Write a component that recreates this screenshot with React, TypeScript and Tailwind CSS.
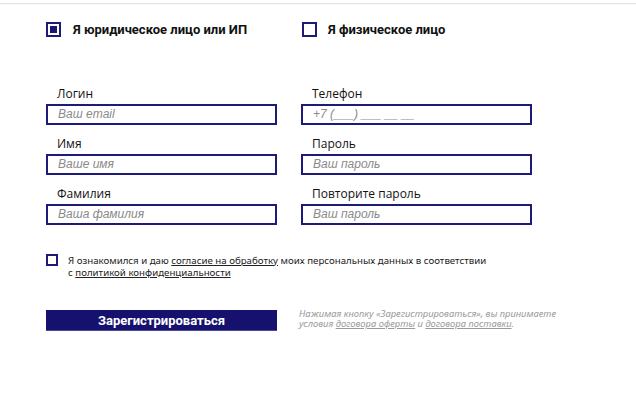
import React from "react";

const Field = ({ label, placeholder }: { label: string; placeholder: string }) => (
  <div className="flex flex-col">
    <label className="block pl-[11px] text-[12px] leading-[14px] font-medium text-[#111] mb-[3px] font-['Open_Sans',sans-serif]">
      {label}
    </label>
    <div className="h-[21px] border-2 border-[#1e1a78] flex items-center pl-[10px]">
      <span className="text-[12px] italic text-[#8a8a8a] font-['Liberation_Sans',sans-serif]">
        {placeholder}
      </span>
    </div>
  </div>
);

const App = () => {
  return (
    <div className="w-[636px] h-[399px] bg-white relative overflow-hidden">
      <div className="h-[4px] border-b border-[#e6e6e6] shadow-[0_1px_1px_rgba(0,0,0,0.04)]" />

      <div className="pl-[46px] pt-[16px]">
        <div className="flex items-center">
          <div className="flex items-center w-[256px]">
            <span className="w-[15px] h-[15px] border-2 border-[#1e1a78] p-[2px] flex">
              <span className="flex-1 bg-[#1a1670]" />
            </span>
            <span className="ml-[12px] text-[13px] font-bold text-[#111] font-['Roboto',sans-serif]">
              Я юридическое лицо или ИП
            </span>
          </div>
          <div className="flex items-center">
            <span className="w-[15px] h-[15px] border-2 border-[#1e1a78]" />
            <span className="ml-[11px] text-[13px] font-bold text-[#111] font-['Roboto',sans-serif]">
              Я физическое лицо
            </span>
          </div>
        </div>

        <div className="grid grid-cols-[231px_231px] gap-x-[24px] gap-y-[12px] mt-[47px]">
          <Field label="Логин" placeholder="Ваш email" />
          <Field label="Телефон" placeholder="+7 (___) ___ __ __" />
          <Field label="Имя" placeholder="Ваше имя" />
          <Field label="Пароль" placeholder="Ваш пароль" />
          <Field label="Фамилия" placeholder="Ваша фамилия" />
          <Field label="Повторите пароль" placeholder="Ваш пароль" />
        </div>

        <div className="flex items-start mt-[29px]">
          <span className="w-[12px] h-[12px] border-2 border-[#1e1a78] shrink-0" />
          <p className="ml-[10px] pt-[1px] text-[9.7px] leading-[12px] text-[#222] font-['Noto_Sans',sans-serif]">
            Я ознакомился и даю <a className="underline">согласие на обработку</a> моих персональных данных в соответствии
            <br />с <a className="underline">политикой конфиденциальности</a>
          </p>
        </div>

        <div className="flex items-start mt-[31px]">
          <button className="w-[231px] h-[21px] bg-[#16116e] text-white text-[13px] font-bold font-['Roboto',sans-serif] leading-[21px] border-b border-[#4a4a9a]">
            Зарегистрироваться
          </button>
          <p className="ml-[22px] -mt-[1px] text-[9.4px] leading-[10.5px] italic text-[#9a9a9a] font-['Noto_Sans',sans-serif]">
            Нажимая кнопку «Зарегистрироваться», вы принимаете
            <br />
            условия <a className="underline">договора оферты</a> и <a className="underline">договора поставки</a>.
          </p>
        </div>
      </div>
    </div>
  );
};

export default App;
